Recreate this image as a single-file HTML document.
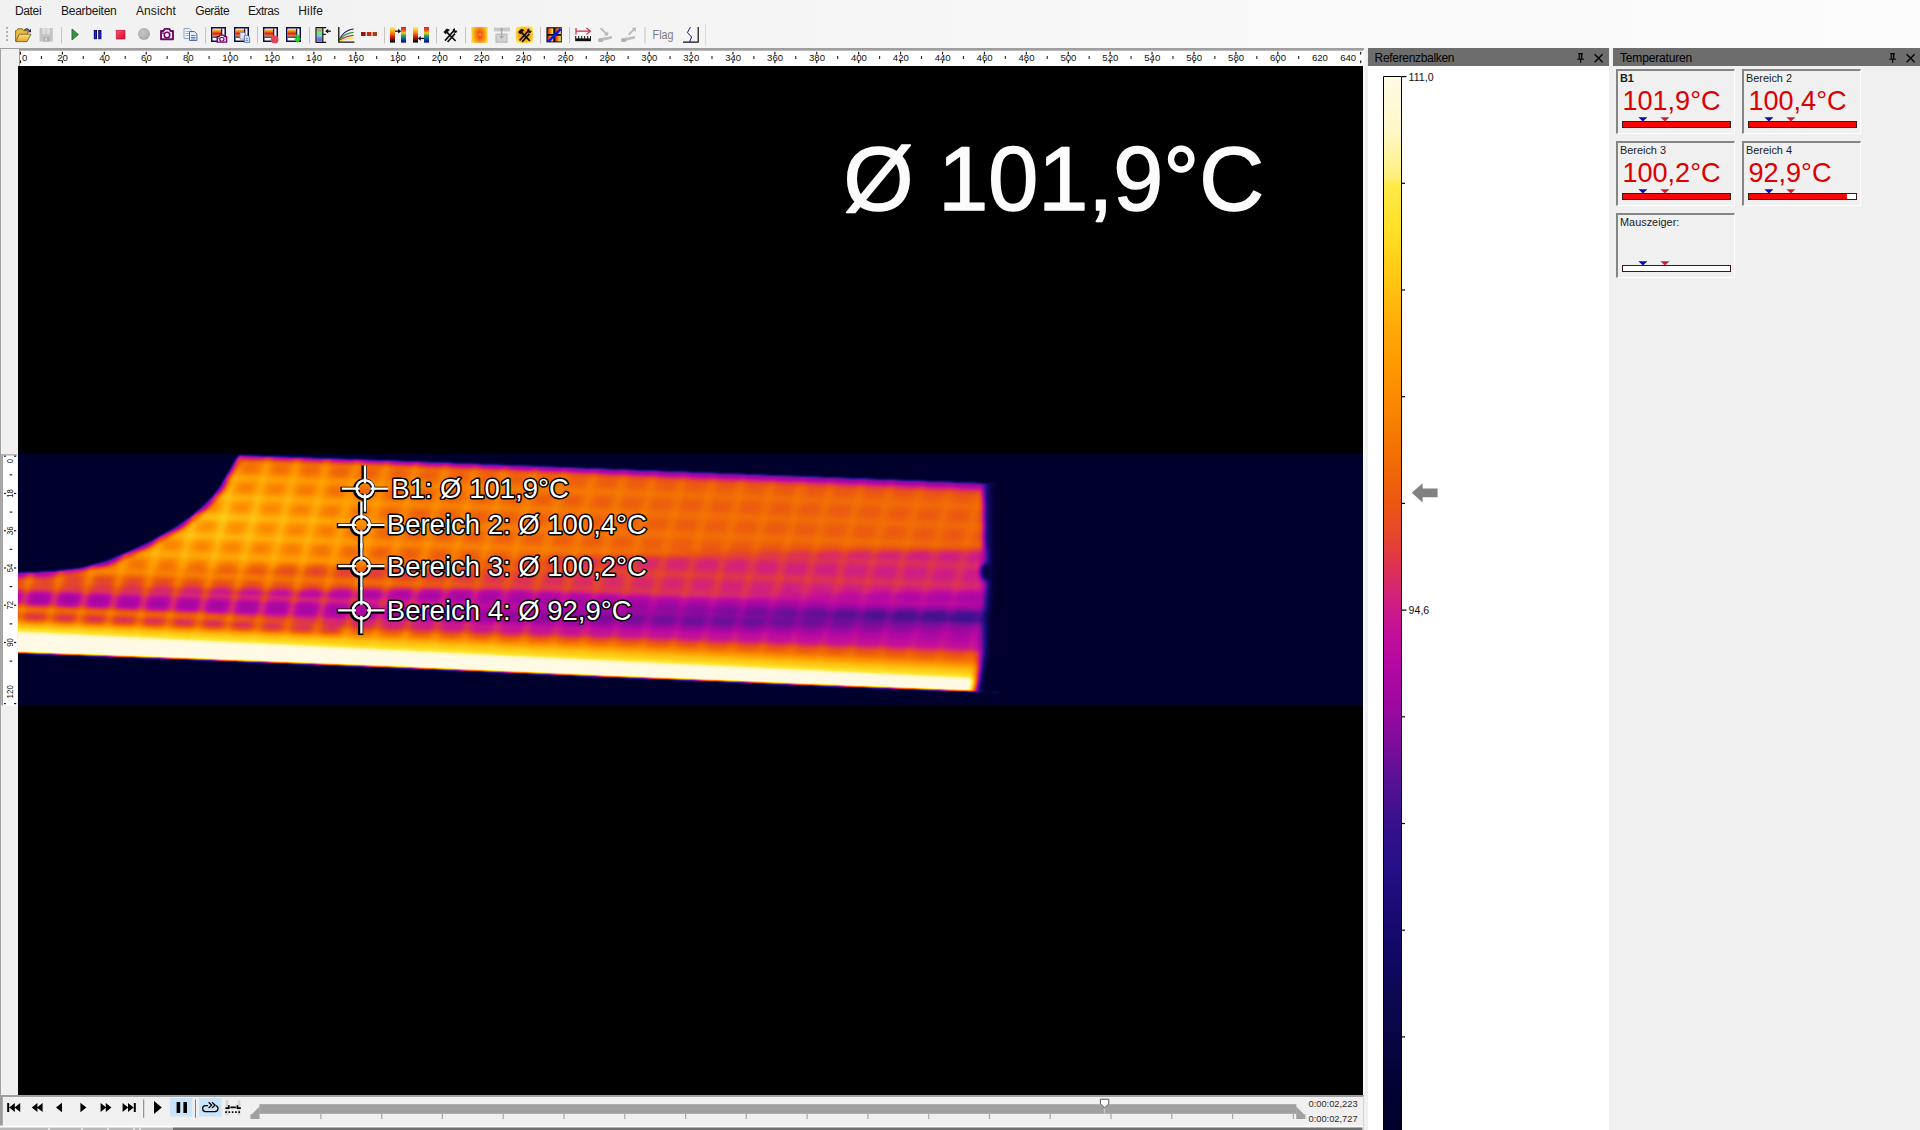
<!DOCTYPE html>
<html lang="de"><head><meta charset="utf-8"><title>Thermografie</title>
<style>
html,body{margin:0;padding:0}
body{width:1920px;height:1130px;overflow:hidden;background:#f0f0f0;position:relative;font-family:"Liberation Sans",sans-serif;color:#000}
.abs{position:absolute}
svg{display:block}
#topbar{left:0;top:0;width:1920px;height:48px;background:linear-gradient(90deg,#f1f1f1 0%,#f3f3f3 25%,#f8f8f8 60%,#fcfcfc 100%)}
.mi{position:absolute;top:3px;height:16px;line-height:16px;font-size:12px;white-space:nowrap;color:#161616}
.ptitle{position:absolute;top:48px;height:18px;background:#6d6d6d;line-height:17px;font-size:12px;color:#000;white-space:nowrap}
.ptitle span{position:absolute;left:6.6px;top:2px}
.ptitle svg{position:absolute;top:0}
#refpanel{left:1368px;top:66px;width:241px;height:1064px;background:#fff;overflow:hidden}
.tbox{position:absolute;width:116px;height:62px;border-top:2px solid #858585;border-left:2px solid #858585;border-right:1px solid #fff;border-bottom:1px solid #fff}
.tbox .lb{position:absolute;left:2px;top:1px;font-size:10.9px;line-height:13px;white-space:nowrap;color:#1c1c1c}
.tbox .val{position:absolute;left:4.4px;top:14.4px;font-size:27.1px;line-height:32px;color:#dc0000;white-space:nowrap}
.tbox .bar{position:absolute;left:4px;top:50px;width:107px;height:5px;border:1px solid #3a1a1a;background:#fff}
.tbox .bar i{display:block;height:5px;background:#fa0505}
.tbox svg{position:absolute;left:0;top:44px}
.time{position:absolute;left:1308.5px;font-size:9.3px;line-height:10px;color:#2c2c2c;white-space:nowrap}
#player{left:0;top:1095px;width:1364px;height:35px}
</style></head><body>
<div id="topbar" class="abs"><div class="mi" style="left:15px;letter-spacing:-0.363px">Datei</div><div class="mi" style="left:61px;letter-spacing:-0.254px">Bearbeiten</div><div class="mi" style="left:136px;letter-spacing:0.093px">Ansicht</div><div class="mi" style="left:195.3px;letter-spacing:-0.481px">Geräte</div><div class="mi" style="left:248px;letter-spacing:-0.501px">Extras</div><div class="mi" style="left:298.3px;letter-spacing:0.159px">Hilfe</div><svg class="abs" style="left:0;top:22px" width="720" height="26" viewBox="0 22 720 26"><defs>
<linearGradient id="gIron" x1="0" y1="0" x2="0" y2="1"><stop offset="0" stop-color="#fff35a"/><stop offset=".3" stop-color="#f6a412"/><stop offset=".6" stop-color="#dd2412"/><stop offset=".85" stop-color="#4a0a0a"/><stop offset="1" stop-color="#000"/></linearGradient>
<linearGradient id="gRain" x1="0" y1="0" x2="0" y2="1"><stop offset="0" stop-color="#d8203a"/><stop offset=".2" stop-color="#e84a20"/><stop offset=".38" stop-color="#e8d020"/><stop offset=".55" stop-color="#28b040"/><stop offset=".78" stop-color="#1048c8"/><stop offset="1" stop-color="#000058"/></linearGradient>
<linearGradient id="gTh" x1="0" y1="0" x2="0" y2="1"><stop offset="0" stop-color="#ffd83a"/><stop offset=".35" stop-color="#f07818"/><stop offset=".6" stop-color="#e01c10"/><stop offset="1" stop-color="#f6a020"/></linearGradient>
<linearGradient id="gPast" x1="0" y1="0" x2="0" y2="1"><stop offset="0" stop-color="#a8a048"/><stop offset=".3" stop-color="#7ae070"/><stop offset=".55" stop-color="#68d8d8"/><stop offset=".8" stop-color="#6868f0"/><stop offset="1" stop-color="#a070d8"/></linearGradient>
<linearGradient id="gRY" x1="0" y1="0" x2="1" y2="0"><stop offset="0" stop-color="#d81818"/><stop offset=".5" stop-color="#f89018"/><stop offset="1" stop-color="#fff060"/></linearGradient>
<linearGradient id="gStop" x1="0" y1="0" x2="1" y2="1"><stop offset="0" stop-color="#f8506c"/><stop offset="1" stop-color="#d80c30"/></linearGradient>
<radialGradient id="gRec" cx=".4" cy=".4" r=".7"><stop offset="0" stop-color="#c6c6c6"/><stop offset="1" stop-color="#a6a6a6"/></radialGradient>
<linearGradient id="gOr" x1="0" y1="0" x2="1" y2="0"><stop offset="0" stop-color="#ffe028"/><stop offset=".25" stop-color="#f88c10"/><stop offset=".52" stop-color="#ee4c10"/><stop offset=".78" stop-color="#f88c10"/><stop offset="1" stop-color="#ffe028"/></linearGradient>
<linearGradient id="gOrV" x1="0" y1="0" x2="0" y2="1"><stop offset="0" stop-color="#ffd820" stop-opacity=".55"/><stop offset=".3" stop-color="#ffd820" stop-opacity="0"/><stop offset=".7" stop-color="#ffd820" stop-opacity="0"/><stop offset="1" stop-color="#ffd820" stop-opacity=".55"/></linearGradient>
<linearGradient id="gFold" x1="0" y1="0" x2="0" y2="1"><stop offset="0" stop-color="#fbe08a"/><stop offset="1" stop-color="#e0a828"/></linearGradient>
<g id="thframe"><rect x=".75" y=".75" width="13.5" height="13.5" fill="#fff" stroke="#0a0a46" stroke-width="1.5"/><rect x="1.5" y="2.2" width="8.6" height="7.3" fill="url(#gTh)"/><rect x="10.1" y="1.5" width="1.2" height="12" fill="#0a0a46"/><rect x="1.5" y="9.5" width="12" height="1.2" fill="#0a0a46"/></g>
<g id="cam"><path d="M1,3.6h2.4l1.3-2.1h4.6l1.3,2.1h2.4v8.2h-12z" fill="#fbe6f8" stroke="#690a69" stroke-width="1.9" stroke-linejoin="round"/><circle cx="7" cy="7.6" r="2.7" fill="#fff" stroke="#690a69" stroke-width="1.6"/><rect x="2.2" y="5" width="1.6" height="1.4" fill="#690a69"/></g>
<g id="tools"><path d="M2.6,13.2L11.4,3.4M5.2,14.6L12.6,6.2" stroke="#111" stroke-width="1.7" fill="none"/><path d="M3.4,3.8L13.2,13.6" stroke="#111" stroke-width="1.7"/><path d="M1,4.6L4.4,1.2L7.6,2.4L3.2,6.8z" fill="#111"/><path d="M10.2,2.2l2.2,-1.6l0.3,2.4l2.4,0.4l-1.4,2.2l-2.6,-0.6z" fill="#111"/></g>
</defs><rect x="6" y="27" width="2" height="2" fill="#b2b2b2"/><rect x="6" y="31" width="2" height="2" fill="#b2b2b2"/><rect x="6" y="35" width="2" height="2" fill="#b2b2b2"/><rect x="6" y="39" width="2" height="2" fill="#b2b2b2"/><rect x="61" y="27" width="1" height="16.4" fill="#c4c4c4"/><rect x="205" y="27" width="1" height="16.4" fill="#c4c4c4"/><rect x="257" y="27" width="1" height="16.4" fill="#c4c4c4"/><rect x="309" y="27" width="1" height="16.4" fill="#c4c4c4"/><rect x="384" y="27" width="1" height="16.4" fill="#c4c4c4"/><rect x="436" y="27" width="1" height="16.4" fill="#c4c4c4"/><rect x="465" y="27" width="1" height="16.4" fill="#c4c4c4"/><rect x="540" y="27" width="1" height="16.4" fill="#c4c4c4"/><rect x="569" y="27" width="1" height="16.4" fill="#c4c4c4"/><rect x="644.5" y="27" width="1" height="16.4" fill="#c4c4c4"/><rect x="705" y="24" width="1" height="22" fill="#dcdcdc"/><path d="M15.6,41.2V30.6h1.2l1.2-1.8h4.4l1.2,1.8h4.2v3.6" fill="#e6bc48" stroke="#8c6c1c" stroke-width="1"/><path d="M15.8,41.6L19.2,34.2H31L27,41.6z" fill="url(#gFold)" stroke="#8c6c1c" stroke-width="1" stroke-linejoin="round"/><path d="M24.4,30.2q2.6,-3 5.2,0.6" fill="none" stroke="#1e2a52" stroke-width="1.2"/><path d="M31,28.8v3.4h-3.4z" fill="#1e2a52"/><rect x="39.6" y="28" width="13.2" height="13.6" fill="#c4c4c4"/><rect x="42.4" y="28" width="7.6" height="6.2" fill="#dedede"/><rect x="45.6" y="28.4" width="1" height="5.4" fill="#c4c4c4"/><rect x="43.4" y="37" width="6.4" height="4.6" fill="#b0b0b0"/><rect x="45" y="38" width="2" height="2.6" fill="#d6d6d6"/><path d="M72,29L78.4,34.5L72,40z" fill="#379446" stroke="#1f6a2b" stroke-width=".9" stroke-linejoin="round"/><rect x="93.8" y="30" width="3.2" height="9.2" fill="#08087c"/><rect x="94.8" y="30.6" width="1.2" height="8" fill="#2c2cc4"/><rect x="98.2" y="30" width="3.2" height="9.2" fill="#08087c"/><rect x="99.2" y="30.6" width="1.2" height="8" fill="#2c2cc4"/><rect x="116.2" y="30.2" width="8.8" height="8.8" fill="url(#gStop)" stroke="#c01030" stroke-width=".6"/><circle cx="144" cy="34" r="6" fill="url(#gRec)"/><g transform="translate(160,27.4)"><use href="#cam"/></g><path d="M184,28.5h5.6l2,2v8h-7.6z" fill="#f2f5fb" stroke="#8fa3c6" stroke-width="1"/><path d="M185.6,31.5h4M185.6,33.5h4M185.6,35.5h3" stroke="#9db0d2" stroke-width="1"/><path d="M189.5,31.5h5l2.4,2.4v6.6h-7.4z" fill="#e4ecf9" stroke="#4f70a8" stroke-width="1"/><path d="M191,35.5h4.4M191,37.5h4.4M191,39h4.4" stroke="#5f7fb6" stroke-width="1"/><g transform="translate(211,27)"><use href="#thframe"/></g><g transform="translate(216.4,34.2) scale(.78,.68)"><use href="#cam"/></g><g transform="translate(234,27)"><use href="#thframe"/></g><path d="M240,32.5h4l1.6,1.6v5h-5.6z" fill="#e4e4ec" stroke="#9090a8" stroke-width=".9"/><path d="M244.4,35.4h3.4l1.8,1.8v5.2h-5.2z" fill="#dfe6f6" stroke="#5874ac" stroke-width=".9"/><path d="M245.6,38.6h2.6M245.6,40.4h2.6" stroke="#5874ac" stroke-width=".8"/><g transform="translate(263,27)"><use href="#thframe"/></g><circle cx="274.6" cy="39.4" r="3.9" fill="#e0485a"/><g transform="translate(286,27)"><use href="#thframe"/></g><path d="M296.2,34.5h2.6v4h2.4l-3.7,4.6l-3.7,-4.6h2.4z" fill="#22d322"/><rect x="316.6" y="28.6" width="5.6" height="13" fill="url(#gPast)"/><path d="M315.6,27.6h10.6M315.6,42.4h10.6M316,27.6v14.8M322.8,27.6v14.8M322.8,34.4h3" stroke="#111" stroke-width="1.2" fill="none"/><path d="M326.2,31.2h4.6" stroke="#111" stroke-width="1.3"/><path d="M325.2,31.2l3,-2.4v4.8z" fill="#111"/><path d="M339,40Q344,30 353.6,29" stroke="#101070" stroke-width="1.1" fill="none"/><path d="M339,40.4Q345,33 353.6,32.4" stroke="#2a9a3a" stroke-width="1.1" fill="none"/><path d="M339,40.8Q346,36 353.6,35.4" stroke="#d42a2a" stroke-width="1.1" fill="none"/><path d="M339,41.2Q347,38.6 353.6,38.4" stroke="#e8e048" stroke-width="1.3" fill="none"/><path d="M338.8,27v15.2H354.4" stroke="#111" stroke-width="1.3" fill="none"/><rect x="361" y="32" width="4.6" height="4" fill="#8c1a12"/><rect x="366.8" y="32" width="4.6" height="4" fill="#c42c16"/><rect x="372.6" y="32" width="4.4" height="4" fill="#9c4418"/><rect x="390" y="27" width="5" height="15.6" fill="url(#gIron)"/><rect x="401" y="27" width="5" height="15.6" fill="url(#gRain)"/><path d="M395,31.2h4" stroke="#111" stroke-width="1.3"/><path d="M401.2,31.2l-3,-2.4v4.8z" fill="#111"/><rect x="413" y="27" width="5" height="15.6" fill="url(#gIron)"/><rect x="424" y="27" width="5" height="15.6" fill="url(#gRain)"/><path d="M420,38.4h4" stroke="#111" stroke-width="1.3"/><path d="M417.8,38.4l3,-2.4v4.8z" fill="#111"/><g transform="translate(442.4,27.4)"><use href="#tools"/></g><rect x="471.4" y="27" width="16.2" height="15.6" fill="url(#gOr)"/><rect x="471.4" y="27" width="16.2" height="15.6" fill="url(#gOrV)"/><circle cx="480" cy="34.4" r="1" fill="#f8a070"/><rect x="494" y="27.6" width="16" height="3.8" fill="#c9c9c9"/><rect x="496" y="34.2" width="11" height="8" fill="#d2d2d2" stroke="#b4b4b4" stroke-width="1"/><path d="M501.6,29v8" stroke="#a9a9a9" stroke-width="1.4"/><path d="M499,36h5.2l-2.6,3z" fill="#a9a9a9"/><path d="M499.4,29.8h4.4l-2.2,-2.4z" fill="#a9a9a9"/><defs><radialGradient id="gTO" cx=".5" cy=".5" r=".62"><stop offset="0" stop-color="#f08418"/><stop offset=".6" stop-color="#f8b020"/><stop offset="1" stop-color="#ffe838" stop-opacity=".75"/></radialGradient></defs><rect x="516" y="26.6" width="17" height="16.4" rx="2" fill="url(#gTO)"/><g transform="translate(517,27.6) scale(.98)"><use href="#tools"/></g><rect x="546.4" y="27.2" width="15.4" height="15.2" fill="#111"/><rect x="547.6" y="28.4" width="5.6" height="5.6" fill="url(#gRY)"/><rect x="555.2" y="28.4" width="5.6" height="5.6" fill="url(#gRY)"/><rect x="547.6" y="35.8" width="5.6" height="5.6" fill="url(#gRY)"/><rect x="555.2" y="35.8" width="5.6" height="5.6" fill="url(#gRY)"/><path d="M548.4,41.6L560.6,29" stroke="#1616e6" stroke-width="2.6"/><path d="M576,28v6.4M576,31.2h13.6" stroke="#c0304c" stroke-width="1.2" fill="none"/><path d="M586.4,28l4,3.2l-4,3.2" stroke="#c0304c" stroke-width="1.2" fill="none"/><rect x="575.2" y="38.4" width="15.8" height="2.8" fill="#111"/><rect x="575.2" y="36" width="1" height="3" fill="#111"/><rect x="578.2" y="36" width="1" height="3" fill="#111"/><rect x="581.2" y="36" width="1" height="3" fill="#111"/><rect x="584.2" y="36" width="1" height="3" fill="#111"/><rect x="587.2" y="36" width="1" height="3" fill="#111"/><rect x="590" y="36" width="1" height="3" fill="#111"/><path d="M600.6,28.2l6.6,6.4" stroke="#b7b7b7" stroke-width="1.8"/><path d="M604,35.4h4.2v-4.2z" fill="#b7b7b7"/><path d="M598.6,38.6l13.4,-2.6v2.6l-13.4,3.4z" fill="#bdbdbd"/><rect x="598.4" y="38.6" width="4.4" height="3.4" fill="#b0b0b0"/><path d="M628.6,34.6l6.4,-6" stroke="#b7b7b7" stroke-width="1.8"/><path d="M631.6,27.8h4.2v4.2z" fill="#b7b7b7"/><path d="M621.6,38.6l13.4,-2.6v2.6l-13.4,3.4z" fill="#bdbdbd"/><rect x="621.4" y="38.6" width="4.4" height="3.4" fill="#b0b0b0"/><text x="652.6" y="38.6" font-family="Liberation Sans, sans-serif" font-size="12" fill="#7c7c7c" textLength="20.8" lengthAdjust="spacingAndGlyphs">Flag</text><path d="M690.4,27.2L687.4,32.6L691.6,37L689.6,42" stroke="#14147c" stroke-width="1" fill="none"/><path d="M698.2,27v15.2H683" stroke="#111" stroke-width="1.2" fill="none"/></svg></div>
<svg class="abs" style="left:0;top:48px" width="1366" height="1050" viewBox="0 48 1366 1050" font-family="Liberation Sans, sans-serif"><defs>
<filter id="iron" filterUnits="userSpaceOnUse" x="18" y="454" width="1345" height="252" color-interpolation-filters="sRGB">
<feGaussianBlur stdDeviation="1.25"/>
<feComponentTransfer><feFuncR type="table" tableValues="0.000 0.005 0.012 0.021 0.030 0.037 0.043 0.050 0.059 0.070 0.082 0.098 0.115 0.137 0.162 0.195 0.234 0.291 0.349 0.425 0.502 0.563 0.624 0.670 0.713 0.747 0.780 0.810 0.841 0.868 0.889 0.905 0.921 0.933 0.943 0.955 0.968 0.978 0.988 0.998 1.000 1.000 1.000 1.000 1.000 1.000 1.000 1.000 1.000 1.000 1.000 1.000 1.000 1.000 1.000"/><feFuncG type="table" tableValues="0.000 0.000 0.003 0.009 0.015 0.021 0.027 0.031 0.031 0.031 0.033 0.041 0.049 0.056 0.063 0.063 0.063 0.063 0.062 0.055 0.047 0.039 0.032 0.031 0.035 0.052 0.077 0.118 0.159 0.203 0.254 0.295 0.333 0.373 0.413 0.450 0.487 0.522 0.556 0.590 0.624 0.658 0.704 0.749 0.791 0.831 0.872 0.893 0.911 0.942 0.955 0.969 0.976 0.980 0.984"/><feFuncB type="table" tableValues="0.173 0.183 0.200 0.224 0.248 0.273 0.297 0.326 0.362 0.390 0.416 0.446 0.478 0.512 0.542 0.546 0.553 0.567 0.581 0.596 0.612 0.619 0.627 0.636 0.638 0.612 0.574 0.513 0.418 0.316 0.214 0.143 0.082 0.049 0.029 0.017 0.005 0.000 0.000 0.000 0.014 0.031 0.046 0.062 0.082 0.110 0.151 0.204 0.260 0.505 0.627 0.750 0.815 0.859 0.902"/><feFuncA type="linear" slope="0" intercept="1"/></feComponentTransfer>
</filter>
<filter id="b3" filterUnits="userSpaceOnUse" x="-100" y="380" width="1300" height="400" color-interpolation-filters="sRGB"><feGaussianBlur stdDeviation="3"/></filter>
<filter id="b5" filterUnits="userSpaceOnUse" x="-100" y="380" width="1300" height="400" color-interpolation-filters="sRGB"><feGaussianBlur stdDeviation="4.2"/></filter>
<filter id="b8" filterUnits="userSpaceOnUse" x="-100" y="380" width="1300" height="400" color-interpolation-filters="sRGB"><feGaussianBlur stdDeviation="9"/></filter>
<filter id="b15" filterUnits="userSpaceOnUse" x="-100" y="380" width="1300" height="400" color-interpolation-filters="sRGB"><feGaussianBlur stdDeviation="2.3"/></filter>
<filter id="b2" filterUnits="userSpaceOnUse" x="-100" y="380" width="1300" height="400" color-interpolation-filters="sRGB"><feGaussianBlur stdDeviation="2"/></filter>
<clipPath id="objclip"><path d="M-10,572.6 L18,572.4 L30,572.2 L55,571 L80,568 L105,561.2 L129,551.6 L152,540.4 L170,530.5 L180,523.9 L192.6,515.3 L202.9,506.1 L212.1,497 L219,487.8 L224.7,478.6 L229.3,470.6 L233.9,462.6 L237,457.8 L239.4,455.2 L400,460.8 L600,468.4 L800,476 L1002,483.8 L1002,692.6 L977,691.6 L800,684.4 L600,676.2 L400,667.6 L200,659.6 L18,652.8 L-10,651.8 Z"/></clipPath>
<linearGradient id="hbase" gradientUnits="userSpaceOnUse" x1="18" y1="0" x2="986" y2="0"><stop offset="0" stop-color="#acacac"/><stop offset=".36" stop-color="#a7a7a7"/><stop offset=".7" stop-color="#9f9f9f"/><stop offset="1" stop-color="#9d9d9d"/></linearGradient>
<radialGradient id="warm" gradientUnits="userSpaceOnUse" cx="215" cy="520" r="190" gradientTransform="translate(215,520) scale(1,.36) translate(-215,-520)"><stop offset="0" stop-color="#fff" stop-opacity=".34"/><stop offset=".6" stop-color="#fff" stop-opacity=".18"/><stop offset="1" stop-color="#fff" stop-opacity="0"/></radialGradient>
<linearGradient id="hcold" gradientUnits="userSpaceOnUse" x1="400" y1="0" x2="986" y2="0"><stop offset="0" stop-color="#fff" stop-opacity="0"/><stop offset=".4" stop-color="#fff" stop-opacity=".55"/><stop offset="1" stop-color="#fff" stop-opacity="1"/></linearGradient>
<linearGradient id="hL1" gradientUnits="userSpaceOnUse" x1="18" y1="0" x2="986" y2="0"><stop offset="0" stop-color="#fff" stop-opacity=".32"/><stop offset=".35" stop-color="#fff" stop-opacity=".42"/><stop offset=".7" stop-color="#fff" stop-opacity=".8"/><stop offset="1" stop-color="#fff" stop-opacity=".95"/></linearGradient>
<mask id="mL1" maskUnits="userSpaceOnUse" x="0" y="440" width="1000" height="280"><rect x="0" y="440" width="1000" height="280" fill="url(#hL1)"/></mask>
<mask id="mcold" maskUnits="userSpaceOnUse" x="0" y="440" width="1000" height="280"><rect x="0" y="440" width="1000" height="280" fill="url(#hcold)"/></mask>
<radialGradient id="blob"><stop offset="0" stop-color="#000" stop-opacity=".10"/><stop offset=".6" stop-color="#000" stop-opacity=".06"/><stop offset="1" stop-color="#000" stop-opacity="0"/></radialGradient>
<pattern id="tex" patternUnits="userSpaceOnUse" x="3" y="448" width="29.7" height="19.6">
<rect x="0" y="0" width="6.5" height="19.6" fill="#fff" fill-opacity=".15"/>
<rect x="0" y="0" width="29.7" height="5.5" fill="#fff" fill-opacity=".16"/>
<ellipse cx="18.1" cy="12.5" rx="12" ry="7.5" fill="url(#blob)"/>
</pattern>
<linearGradient id="htex" gradientUnits="userSpaceOnUse" x1="18" y1="0" x2="986" y2="0"><stop offset="0" stop-color="#fff" stop-opacity="1"/><stop offset=".3" stop-color="#fff" stop-opacity=".9"/><stop offset=".65" stop-color="#fff" stop-opacity=".36"/><stop offset="1" stop-color="#fff" stop-opacity=".28"/></linearGradient>
<mask id="mtex" maskUnits="userSpaceOnUse" x="0" y="400" width="1040" height="340"><rect x="0" y="400" width="1040" height="340" fill="url(#htex)"/></mask>
</defs><rect x="0" y="48" width="1364" height="1" fill="#9c9c9c"/><rect x="0" y="49" width="1" height="1047" fill="#a2a2a2"/><rect x="1" y="454" width="1" height="251" fill="#b0b0b0"/><rect x="19" y="50" width="1345" height="16" fill="#fff"/><rect x="19" y="48" width="1345" height="2.7" fill="#9e9e9e"/><rect x="19" y="50" width="1" height="16" fill="#a0a0a0"/><rect x="19.90" y="51.8" width="1.2" height="2.8" fill="#1a1a1a"/><rect x="19.90" y="60.4" width="1.2" height="2.8" fill="#1a1a1a"/><text x="22" y="60.9" font-size="9.6" fill="#111">0</text><rect x="61.81" y="51.8" width="1.2" height="2.8" fill="#1a1a1a"/><rect x="61.81" y="60.4" width="1.2" height="2.8" fill="#1a1a1a"/><text x="62.61" y="60.9" font-size="9.6" fill="#111" text-anchor="middle">20</text><rect x="103.72" y="51.8" width="1.2" height="2.8" fill="#1a1a1a"/><rect x="103.72" y="60.4" width="1.2" height="2.8" fill="#1a1a1a"/><text x="104.52" y="60.9" font-size="9.6" fill="#111" text-anchor="middle">40</text><rect x="145.63" y="51.8" width="1.2" height="2.8" fill="#1a1a1a"/><rect x="145.63" y="60.4" width="1.2" height="2.8" fill="#1a1a1a"/><text x="146.43" y="60.9" font-size="9.6" fill="#111" text-anchor="middle">60</text><rect x="187.54" y="51.8" width="1.2" height="2.8" fill="#1a1a1a"/><rect x="187.54" y="60.4" width="1.2" height="2.8" fill="#1a1a1a"/><text x="188.34" y="60.9" font-size="9.6" fill="#111" text-anchor="middle">80</text><rect x="229.45" y="51.8" width="1.2" height="2.8" fill="#1a1a1a"/><rect x="229.45" y="60.4" width="1.2" height="2.8" fill="#1a1a1a"/><text x="230.25" y="60.9" font-size="9.6" fill="#111" text-anchor="middle">100</text><rect x="271.36" y="51.8" width="1.2" height="2.8" fill="#1a1a1a"/><rect x="271.36" y="60.4" width="1.2" height="2.8" fill="#1a1a1a"/><text x="272.16" y="60.9" font-size="9.6" fill="#111" text-anchor="middle">120</text><rect x="313.27" y="51.8" width="1.2" height="2.8" fill="#1a1a1a"/><rect x="313.27" y="60.4" width="1.2" height="2.8" fill="#1a1a1a"/><text x="314.07" y="60.9" font-size="9.6" fill="#111" text-anchor="middle">140</text><rect x="355.18" y="51.8" width="1.2" height="2.8" fill="#1a1a1a"/><rect x="355.18" y="60.4" width="1.2" height="2.8" fill="#1a1a1a"/><text x="355.98" y="60.9" font-size="9.6" fill="#111" text-anchor="middle">160</text><rect x="397.09" y="51.8" width="1.2" height="2.8" fill="#1a1a1a"/><rect x="397.09" y="60.4" width="1.2" height="2.8" fill="#1a1a1a"/><text x="397.89" y="60.9" font-size="9.6" fill="#111" text-anchor="middle">180</text><rect x="439.00" y="51.8" width="1.2" height="2.8" fill="#1a1a1a"/><rect x="439.00" y="60.4" width="1.2" height="2.8" fill="#1a1a1a"/><text x="439.80" y="60.9" font-size="9.6" fill="#111" text-anchor="middle">200</text><rect x="480.91" y="51.8" width="1.2" height="2.8" fill="#1a1a1a"/><rect x="480.91" y="60.4" width="1.2" height="2.8" fill="#1a1a1a"/><text x="481.71" y="60.9" font-size="9.6" fill="#111" text-anchor="middle">220</text><rect x="522.82" y="51.8" width="1.2" height="2.8" fill="#1a1a1a"/><rect x="522.82" y="60.4" width="1.2" height="2.8" fill="#1a1a1a"/><text x="523.62" y="60.9" font-size="9.6" fill="#111" text-anchor="middle">240</text><rect x="564.73" y="51.8" width="1.2" height="2.8" fill="#1a1a1a"/><rect x="564.73" y="60.4" width="1.2" height="2.8" fill="#1a1a1a"/><text x="565.53" y="60.9" font-size="9.6" fill="#111" text-anchor="middle">260</text><rect x="606.64" y="51.8" width="1.2" height="2.8" fill="#1a1a1a"/><rect x="606.64" y="60.4" width="1.2" height="2.8" fill="#1a1a1a"/><text x="607.44" y="60.9" font-size="9.6" fill="#111" text-anchor="middle">280</text><rect x="648.55" y="51.8" width="1.2" height="2.8" fill="#1a1a1a"/><rect x="648.55" y="60.4" width="1.2" height="2.8" fill="#1a1a1a"/><text x="649.35" y="60.9" font-size="9.6" fill="#111" text-anchor="middle">300</text><rect x="690.46" y="51.8" width="1.2" height="2.8" fill="#1a1a1a"/><rect x="690.46" y="60.4" width="1.2" height="2.8" fill="#1a1a1a"/><text x="691.26" y="60.9" font-size="9.6" fill="#111" text-anchor="middle">320</text><rect x="732.37" y="51.8" width="1.2" height="2.8" fill="#1a1a1a"/><rect x="732.37" y="60.4" width="1.2" height="2.8" fill="#1a1a1a"/><text x="733.17" y="60.9" font-size="9.6" fill="#111" text-anchor="middle">340</text><rect x="774.28" y="51.8" width="1.2" height="2.8" fill="#1a1a1a"/><rect x="774.28" y="60.4" width="1.2" height="2.8" fill="#1a1a1a"/><text x="775.08" y="60.9" font-size="9.6" fill="#111" text-anchor="middle">360</text><rect x="816.19" y="51.8" width="1.2" height="2.8" fill="#1a1a1a"/><rect x="816.19" y="60.4" width="1.2" height="2.8" fill="#1a1a1a"/><text x="816.99" y="60.9" font-size="9.6" fill="#111" text-anchor="middle">380</text><rect x="858.10" y="51.8" width="1.2" height="2.8" fill="#1a1a1a"/><rect x="858.10" y="60.4" width="1.2" height="2.8" fill="#1a1a1a"/><text x="858.90" y="60.9" font-size="9.6" fill="#111" text-anchor="middle">400</text><rect x="900.01" y="51.8" width="1.2" height="2.8" fill="#1a1a1a"/><rect x="900.01" y="60.4" width="1.2" height="2.8" fill="#1a1a1a"/><text x="900.81" y="60.9" font-size="9.6" fill="#111" text-anchor="middle">420</text><rect x="941.92" y="51.8" width="1.2" height="2.8" fill="#1a1a1a"/><rect x="941.92" y="60.4" width="1.2" height="2.8" fill="#1a1a1a"/><text x="942.72" y="60.9" font-size="9.6" fill="#111" text-anchor="middle">440</text><rect x="983.83" y="51.8" width="1.2" height="2.8" fill="#1a1a1a"/><rect x="983.83" y="60.4" width="1.2" height="2.8" fill="#1a1a1a"/><text x="984.63" y="60.9" font-size="9.6" fill="#111" text-anchor="middle">460</text><rect x="1025.74" y="51.8" width="1.2" height="2.8" fill="#1a1a1a"/><rect x="1025.74" y="60.4" width="1.2" height="2.8" fill="#1a1a1a"/><text x="1026.54" y="60.9" font-size="9.6" fill="#111" text-anchor="middle">480</text><rect x="1067.65" y="51.8" width="1.2" height="2.8" fill="#1a1a1a"/><rect x="1067.65" y="60.4" width="1.2" height="2.8" fill="#1a1a1a"/><text x="1068.45" y="60.9" font-size="9.6" fill="#111" text-anchor="middle">500</text><rect x="1109.56" y="51.8" width="1.2" height="2.8" fill="#1a1a1a"/><rect x="1109.56" y="60.4" width="1.2" height="2.8" fill="#1a1a1a"/><text x="1110.36" y="60.9" font-size="9.6" fill="#111" text-anchor="middle">520</text><rect x="1151.47" y="51.8" width="1.2" height="2.8" fill="#1a1a1a"/><rect x="1151.47" y="60.4" width="1.2" height="2.8" fill="#1a1a1a"/><text x="1152.27" y="60.9" font-size="9.6" fill="#111" text-anchor="middle">540</text><rect x="1193.38" y="51.8" width="1.2" height="2.8" fill="#1a1a1a"/><rect x="1193.38" y="60.4" width="1.2" height="2.8" fill="#1a1a1a"/><text x="1194.18" y="60.9" font-size="9.6" fill="#111" text-anchor="middle">560</text><rect x="1235.29" y="51.8" width="1.2" height="2.8" fill="#1a1a1a"/><rect x="1235.29" y="60.4" width="1.2" height="2.8" fill="#1a1a1a"/><text x="1236.09" y="60.9" font-size="9.6" fill="#111" text-anchor="middle">580</text><rect x="1277.20" y="51.8" width="1.2" height="2.8" fill="#1a1a1a"/><rect x="1277.20" y="60.4" width="1.2" height="2.8" fill="#1a1a1a"/><text x="1278.00" y="60.9" font-size="9.6" fill="#111" text-anchor="middle">600</text><text x="1319.91" y="60.9" font-size="9.6" fill="#111" text-anchor="middle">620</text><rect x="1360.10" y="51.8" width="1.2" height="2.8" fill="#1a1a1a"/><rect x="1360.10" y="60.4" width="1.2" height="2.8" fill="#1a1a1a"/><text x="1356.20" y="60.9" font-size="9.6" fill="#111" text-anchor="end">640</text><rect x="40.85" y="56" width="1.1" height="3" fill="#222"/><rect x="82.76" y="56" width="1.1" height="3" fill="#222"/><rect x="124.67" y="56" width="1.1" height="3" fill="#222"/><rect x="166.59" y="56" width="1.1" height="3" fill="#222"/><rect x="208.50" y="56" width="1.1" height="3" fill="#222"/><rect x="250.41" y="56" width="1.1" height="3" fill="#222"/><rect x="292.31" y="56" width="1.1" height="3" fill="#222"/><rect x="334.22" y="56" width="1.1" height="3" fill="#222"/><rect x="376.13" y="56" width="1.1" height="3" fill="#222"/><rect x="418.04" y="56" width="1.1" height="3" fill="#222"/><rect x="459.95" y="56" width="1.1" height="3" fill="#222"/><rect x="501.86" y="56" width="1.1" height="3" fill="#222"/><rect x="543.77" y="56" width="1.1" height="3" fill="#222"/><rect x="585.68" y="56" width="1.1" height="3" fill="#222"/><rect x="627.59" y="56" width="1.1" height="3" fill="#222"/><rect x="669.50" y="56" width="1.1" height="3" fill="#222"/><rect x="711.41" y="56" width="1.1" height="3" fill="#222"/><rect x="753.32" y="56" width="1.1" height="3" fill="#222"/><rect x="795.23" y="56" width="1.1" height="3" fill="#222"/><rect x="837.14" y="56" width="1.1" height="3" fill="#222"/><rect x="879.05" y="56" width="1.1" height="3" fill="#222"/><rect x="920.96" y="56" width="1.1" height="3" fill="#222"/><rect x="962.87" y="56" width="1.1" height="3" fill="#222"/><rect x="1004.78" y="56" width="1.1" height="3" fill="#222"/><rect x="1046.70" y="56" width="1.1" height="3" fill="#222"/><rect x="1088.61" y="56" width="1.1" height="3" fill="#222"/><rect x="1130.52" y="56" width="1.1" height="3" fill="#222"/><rect x="1172.42" y="56" width="1.1" height="3" fill="#222"/><rect x="1214.34" y="56" width="1.1" height="3" fill="#222"/><rect x="1256.25" y="56" width="1.1" height="3" fill="#222"/><rect x="1298.15" y="56" width="1.1" height="3" fill="#222"/><rect x="1363" y="50" width="1.6" height="1046" fill="#fcfcfc"/><rect x="18" y="66" width="1345" height="1029" fill="#000"/><rect x="2" y="454.6" width="15.2" height="251" fill="#fff"/><rect x="2" y="454.6" width="1" height="251" fill="#a0a0a0"/><rect x="2" y="454.4" width="15" height="1" fill="#909090"/><rect x="14" y="455.60" width="2.2" height="1.2" fill="#1a1a1a"/><rect x="4" y="455.60" width="1.9" height="1.2" fill="#1a1a1a"/><text transform="translate(12.6,458.90) rotate(-90)" font-size="9.6" fill="#111" text-anchor="end" textLength="4.4" lengthAdjust="spacingAndGlyphs">0</text><rect x="14" y="492.86" width="2.2" height="1.2" fill="#1a1a1a"/><rect x="4" y="492.86" width="1.9" height="1.2" fill="#1a1a1a"/><text transform="translate(12.6,493.46) rotate(-90)" font-size="9.6" fill="#111" text-anchor="middle" textLength="8.6" lengthAdjust="spacingAndGlyphs">18</text><rect x="14" y="530.12" width="2.2" height="1.2" fill="#1a1a1a"/><rect x="4" y="530.12" width="1.9" height="1.2" fill="#1a1a1a"/><text transform="translate(12.6,530.72) rotate(-90)" font-size="9.6" fill="#111" text-anchor="middle" textLength="8.6" lengthAdjust="spacingAndGlyphs">36</text><rect x="14" y="567.38" width="2.2" height="1.2" fill="#1a1a1a"/><rect x="4" y="567.38" width="1.9" height="1.2" fill="#1a1a1a"/><text transform="translate(12.6,567.98) rotate(-90)" font-size="9.6" fill="#111" text-anchor="middle" textLength="8.6" lengthAdjust="spacingAndGlyphs">54</text><rect x="14" y="604.64" width="2.2" height="1.2" fill="#1a1a1a"/><rect x="4" y="604.64" width="1.9" height="1.2" fill="#1a1a1a"/><text transform="translate(12.6,605.24) rotate(-90)" font-size="9.6" fill="#111" text-anchor="middle" textLength="8.6" lengthAdjust="spacingAndGlyphs">72</text><rect x="14" y="641.90" width="2.2" height="1.2" fill="#1a1a1a"/><rect x="4" y="641.90" width="1.9" height="1.2" fill="#1a1a1a"/><text transform="translate(12.6,642.50) rotate(-90)" font-size="9.6" fill="#111" text-anchor="middle" textLength="8.6" lengthAdjust="spacingAndGlyphs">90</text><rect x="14" y="703.00" width="2.2" height="1.2" fill="#1a1a1a"/><rect x="4" y="703.00" width="1.9" height="1.2" fill="#1a1a1a"/><text transform="translate(12.6,698.40) rotate(-90)" font-size="9.6" fill="#111" text-anchor="start" textLength="13.2" lengthAdjust="spacingAndGlyphs">120</text><rect x="9.6" y="474.23" width="2.6" height="1.2" fill="#222"/><rect x="9.6" y="511.49" width="2.6" height="1.2" fill="#222"/><rect x="9.6" y="548.75" width="2.6" height="1.2" fill="#222"/><rect x="9.6" y="586.01" width="2.6" height="1.2" fill="#222"/><rect x="9.6" y="623.27" width="2.6" height="1.2" fill="#222"/><rect x="9.6" y="660.53" width="2.6" height="1.2" fill="#222"/><g filter="url(#iron)"><rect x="0" y="440" width="1400" height="280" fill="#000"/><g clip-path="url(#objclip)"><rect x="0" y="440" width="1000" height="270" fill="url(#hbase)"/><rect x="0" y="440" width="500" height="160" fill="url(#warm)"/><g filter="url(#b3)"><path d="M380,452 L1000,476 L1000,493 L700,480 L380,461Z" fill="#787878" fill-opacity=".8"/></g><g filter="url(#b2)"><path d="M-10,572.6 L18,572.4 L30,572.2 L55,571 L80,568 L105,561.2 L129,551.6 L152,540.4 L170,530.5 L180,523.9 L192.6,515.3 L202.9,506.1 L212.1,497 L219,487.8 L224.7,478.6 L229.3,470.6 L233.9,462.6 L237,457.8 L239.4,455.2 L400,460.8 L600,468.4 L800,476 L988,483.2 L989,520 L988,640" fill="none" stroke="#4c4c4c" stroke-opacity=".8" stroke-width="9" stroke-linejoin="round"/></g><g mask="url(#mL1)"><g filter="url(#b3)"><path d="M-20,575 L300,567 L510,560 L700,553 L1000,549 L1000,602 L700,600 L510,589 L300,585 L-20,585Z" fill="#808080"/></g></g><g filter="url(#b3)"><path d="M-20,585.5 L300,590 L510,587 L700,597 L1000,592 L1000,652 L700,641 L510,634 L340,626 L200,615 L-20,606Z" fill="#6b6b6b" fill-opacity=".88"/></g><g filter="url(#b3)"><path d="M-20,610 L200,618 L340,629 L340,636 L200,630 L-20,623Z" fill="#757575" fill-opacity=".55"/></g><g mask="url(#mcold)"><g filter="url(#b5)"><path d="M420,602 L700,608 L1000,610 L1000,627 L700,627 L420,619Z" fill="#3d3d3d" fill-opacity=".72"/></g></g><g mask="url(#mtex)"><g transform="matrix(1,0.0385,-0.24,1,132,-0.693)" filter="url(#b15)"><rect x="-80" y="420" width="1200" height="260" fill="url(#tex)"/></g></g><g filter="url(#b5)"><path d="M-20,622.4 L18,622.8 L500,644.6 L940,664.6 L1000,667.4 L1000,720 L-20,690Z" fill="#d9d9d9" fill-opacity=".92"/></g><g filter="url(#b2)"><path d="M-20,631.4 L18,631.8 L500,655.4 L940,676.4 L1000,679.4 L1000,720 L-20,690Z" fill="#fff"/></g><g filter="url(#b5)"><path d="M988.4,430 L988.4,560 L987.4,612 L985,650 L979,676 L969,720 L1030,720 L1030,430Z" fill="#000"/></g><rect x="996" y="430" width="40" height="300" fill="#000"/><g filter="url(#b2)"><ellipse cx="986" cy="572" rx="5" ry="8" fill="#000" fill-opacity=".8"/></g></g></g><clipPath id="holes" clip-rule="evenodd"><path clip-rule="evenodd" d="M0,0H1400V1200H0ZM359.4,488.6a5.6,5.6 0 1,0 11.2,0a5.6,5.6 0 1,0 -11.2,0ZM355.79999999999995,524.8a5.6,5.6 0 1,0 11.2,0a5.6,5.6 0 1,0 -11.2,0ZM355.79999999999995,566.2a5.6,5.6 0 1,0 11.2,0a5.6,5.6 0 1,0 -11.2,0ZM355.79999999999995,610.4a5.6,5.6 0 1,0 11.2,0a5.6,5.6 0 1,0 -11.2,0Z"/></clipPath><g clip-path="url(#holes)"><g transform="translate(-0.8,0.8)"><path d="M341.2,488.6H388.8M365.0,464.8V512.4" stroke="#000" stroke-width="5.3" fill="none"/><circle cx="365" cy="488.6" r="8.4" fill="none" stroke="#000" stroke-width="5.6"/></g><g transform="translate(-0.8,0.8)"><path d="M337.6,524.8H385.2M361.4,501.0V548.6" stroke="#000" stroke-width="5.3" fill="none"/><circle cx="361.4" cy="524.8" r="8.4" fill="none" stroke="#000" stroke-width="5.6"/></g><g transform="translate(-0.8,0.8)"><path d="M337.6,566.2H385.2M361.4,542.4V590.0" stroke="#000" stroke-width="5.3" fill="none"/><circle cx="361.4" cy="566.2" r="8.4" fill="none" stroke="#000" stroke-width="5.6"/></g><g transform="translate(-0.8,0.8)"><path d="M337.6,610.4H385.2M361.4,586.6V634.2" stroke="#000" stroke-width="5.3" fill="none"/><circle cx="361.4" cy="610.4" r="8.4" fill="none" stroke="#000" stroke-width="5.6"/></g><path d="M341.8,488.6H388.2M365.0,465.4V511.8" stroke="#fff" stroke-width="2.3" fill="none"/><path d="M338.2,524.8H384.6M361.4,501.6V548.0" stroke="#fff" stroke-width="2.3" fill="none"/><path d="M338.2,566.2H384.6M361.4,543.0V589.4" stroke="#fff" stroke-width="2.3" fill="none"/><path d="M338.2,610.4H384.6M361.4,587.2V633.6" stroke="#fff" stroke-width="2.3" fill="none"/><circle cx="365" cy="488.6" r="8.4" fill="none" stroke="#fff" stroke-width="2.6"/><circle cx="361.4" cy="524.8" r="8.4" fill="none" stroke="#fff" stroke-width="2.6"/><circle cx="361.4" cy="566.2" r="8.4" fill="none" stroke="#fff" stroke-width="2.6"/><circle cx="361.4" cy="610.4" r="8.4" fill="none" stroke="#fff" stroke-width="2.6"/></g><text x="391.2" y="498.2" font-size="27.5" fill="#fff" stroke="#000" stroke-width="3" stroke-linejoin="round" paint-order="stroke">B1: Ø 101,9°C</text><text x="386.8" y="534.4" font-size="27.5" fill="#fff" stroke="#000" stroke-width="3" stroke-linejoin="round" paint-order="stroke">Bereich 2: Ø 100,4°C</text><text x="386.8" y="575.8" font-size="27.5" fill="#fff" stroke="#000" stroke-width="3" stroke-linejoin="round" paint-order="stroke">Bereich 3: Ø 100,2°C</text><text x="386.8" y="620.0" font-size="27.5" fill="#fff" stroke="#000" stroke-width="3" stroke-linejoin="round" paint-order="stroke">Bereich 4: Ø 92,9°C</text><text x="843.4" y="210.3" font-size="89.9" fill="#fcfcfc" stroke="#fcfcfc" stroke-width="1.5" stroke-linejoin="round">Ø 101,9°C</text></svg>
<div class="ptitle" style="left:1368px;width:241px"><span style="letter-spacing:-0.325px">Referenzbalken</span><svg width="34" height="18" viewBox="0 0 34 18" style="left:207.0px"><path d="M3.2,5.6h4.6M4.2,5.6v5.6M6.6,5.2v6M2.2,11.2h6.8M5.6,11.4v3.6" stroke="#000" stroke-width="1.1" fill="none"/><rect x="5.8" y="5.6" width="1.4" height="5.6" fill="#000"/><path d="M19.6,6.2l8,8M27.6,6.2l-8,8" stroke="#000" stroke-width="1.3" fill="none"/></svg></div><div id="refpanel" class="abs"><svg width="241" height="1064" viewBox="1368 66 241 1064" font-family="Liberation Sans, sans-serif"><defs><linearGradient id="cbar" gradientUnits="userSpaceOnUse" x1="0" y1="77" x2="0" y2="1130"><stop offset="0.0000" stop-color="#fffbe6"/><stop offset="0.0503" stop-color="#fff8c8"/><stop offset="0.0931" stop-color="#fff080"/><stop offset="0.1035" stop-color="#ffea48"/><stop offset="0.1453" stop-color="#ffe028"/><stop offset="0.1738" stop-color="#ffd018"/><stop offset="0.2023" stop-color="#ffc010"/><stop offset="0.2403" stop-color="#ffa808"/><stop offset="0.2745" stop-color="#ff9800"/><stop offset="0.3257" stop-color="#f88000"/><stop offset="0.3732" stop-color="#f06808"/><stop offset="0.4017" stop-color="#ec5810"/><stop offset="0.4397" stop-color="#e44430"/><stop offset="0.4682" stop-color="#dc3058"/><stop offset="0.4967" stop-color="#d02080"/><stop offset="0.5252" stop-color="#c41098"/><stop offset="0.5594" stop-color="#b408a4"/><stop offset="0.5916" stop-color="#a008a0"/><stop offset="0.6296" stop-color="#800c9c"/><stop offset="0.6676" stop-color="#581094"/><stop offset="0.7085" stop-color="#38108c"/><stop offset="0.7436" stop-color="#28108a"/><stop offset="0.7816" stop-color="#1c0c78"/><stop offset="0.8196" stop-color="#140868"/><stop offset="0.8443" stop-color="#100860"/><stop offset="0.8765" stop-color="#0c0850"/><stop offset="0.9240" stop-color="#080440"/><stop offset="0.9715" stop-color="#020030"/><stop offset="1.0000" stop-color="#00002c"/></linearGradient></defs><rect x="1384" y="77" width="18" height="1060" fill="url(#cbar)"/><path d="M1383.5,1135V76.5H1401.5V1135" stroke="#000" stroke-width="1" fill="none"/><rect x="1402" y="76.0" width="4.5" height="1.2" fill="#000"/><rect x="1402" y="182.7" width="3" height="1.2" fill="#000"/><rect x="1402" y="289.4" width="3" height="1.2" fill="#000"/><rect x="1402" y="396.1" width="3" height="1.2" fill="#000"/><rect x="1402" y="502.8" width="3" height="1.2" fill="#000"/><rect x="1402" y="609.5" width="4.5" height="1.2" fill="#000"/><rect x="1402" y="716.2" width="3" height="1.2" fill="#000"/><rect x="1402" y="822.9" width="3" height="1.2" fill="#000"/><rect x="1402" y="929.6" width="3" height="1.2" fill="#000"/><rect x="1402" y="1036.3" width="3" height="1.2" fill="#000"/><text x="1408.6" y="81" font-size="10.6" fill="#111">111,0</text><text x="1408.6" y="614" font-size="10.6" fill="#111">94,6</text><path d="M1411.8,492.8L1422.6,483.2V488.4H1437.6V497.2H1422.6V502.4Z" fill="#808080"/></svg></div>
<div class="ptitle" style="left:1613px;width:307px"><span style="left:7px;letter-spacing:-0.170px">Temperaturen</span><svg width="34" height="18" viewBox="0 0 34 18" style="left:273.5px"><path d="M3.2,5.6h4.6M4.2,5.6v5.6M6.6,5.2v6M2.2,11.2h6.8M5.6,11.4v3.6" stroke="#000" stroke-width="1.1" fill="none"/><rect x="5.8" y="5.6" width="1.4" height="5.6" fill="#000"/><path d="M19.6,6.2l8,8M27.6,6.2l-8,8" stroke="#000" stroke-width="1.3" fill="none"/></svg></div><div class="tbox" style="left:1616px;top:69px"><div class="lb" style="font-weight:bold">B1</div><div class="val">101,9°C</div><svg width="116" height="8" viewBox="0 0 116 8"><path d="M20.4,2.2h9l-4.5,4.4z" fill="#0a0ab0"/><path d="M42.4,2.2h9l-4.5,4.4z" fill="#cc2030"/></svg><div class="bar"><i style="width:100%"></i></div></div><div class="tbox" style="left:1742px;top:69px"><div class="lb">Bereich 2</div><div class="val">100,4°C</div><svg width="116" height="8" viewBox="0 0 116 8"><path d="M20.4,2.2h9l-4.5,4.4z" fill="#0a0ab0"/><path d="M42.4,2.2h9l-4.5,4.4z" fill="#cc2030"/></svg><div class="bar"><i style="width:100%"></i></div></div><div class="tbox" style="left:1616px;top:141px"><div class="lb">Bereich 3</div><div class="val">100,2°C</div><svg width="116" height="8" viewBox="0 0 116 8"><path d="M20.4,2.2h9l-4.5,4.4z" fill="#0a0ab0"/><path d="M42.4,2.2h9l-4.5,4.4z" fill="#cc2030"/></svg><div class="bar"><i style="width:100%"></i></div></div><div class="tbox" style="left:1742px;top:141px"><div class="lb">Bereich 4</div><div class="val">92,9°C</div><svg width="116" height="8" viewBox="0 0 116 8"><path d="M20.4,2.2h9l-4.5,4.4z" fill="#0a0ab0"/><path d="M42.4,2.2h9l-4.5,4.4z" fill="#cc2030"/></svg><div class="bar"><i style="width:92%"></i></div></div><div class="tbox" style="left:1616px;top:213px"><div class="lb">Mauszeiger:</div><svg width="116" height="8" viewBox="0 0 116 8"><path d="M20.4,2.2h9l-4.5,4.4z" fill="#0a0ab0"/><path d="M42.4,2.2h9l-4.5,4.4z" fill="#cc2030"/></svg><div class="bar"><i style="width:0%"></i></div></div>
<div id="player" class="abs"><svg width="1364" height="35" viewBox="0 1095 1364 35" font-family="Liberation Sans, sans-serif"><rect x="0" y="1095" width="1364" height="2" fill="#a0a0a0"/><rect x="0" y="1096" width="2.8" height="31" fill="#9c9c9c"/><rect x="0" y="1125.6" width="1364" height="1.8" fill="#fcfcfc"/><rect x="0" y="1127.6" width="1364" height="3" fill="#b8b8b8"/><rect x="173" y="1127.6" width="1189" height="3" fill="#707070"/><rect x="48" y="1127.6" width="2" height="3" fill="#e4e4e4"/><rect x="81" y="1127.6" width="2" height="3" fill="#e4e4e4"/><rect x="107" y="1127.6" width="2" height="3" fill="#e4e4e4"/><rect x="133" y="1127.6" width="2" height="3" fill="#e4e4e4"/><rect x="139" y="1127.6" width="2" height="3" fill="#e4e4e4"/><path d="M7.2,1102.9h2v9.2h-2zM9.2,1107.5l5.6,-4.6v9.2zM14.6,1107.5l5.6,-4.6v9.2zM31.8,1107.5l5.6,-4.6v9.2zM37,1107.5l5.6,-4.6v9.2zM56,1107.5l6,-4.8v9.6zM86.4,1107.5l-6,-4.8v9.6zM106.2,1107.5l-5.6,-4.6v9.2zM111.4,1107.5l-5.6,-4.6v9.2zM128.2,1107.5l-5.6,-4.6v9.2zM133.6,1107.5l-5.6,-4.6v9.2zM133.8,1102.9h2v9.2h-2z" fill="#000"/><rect x="143.2" y="1099.4" width="1" height="18.4" fill="#7e7e7e"/><rect x="195" y="1099.4" width="1" height="18.4" fill="#7e7e7e"/><path d="M154,1101.1l7.8,6.4l-7.8,6.4z" fill="#000"/><rect x="170" y="1098" width="22.4" height="18.6" fill="#cce4f7"/><rect x="176.6" y="1102" width="3.6" height="11" fill="#000"/><rect x="183.4" y="1102" width="3.6" height="11" fill="#000"/><rect x="199" y="1098" width="22.6" height="18.6" fill="#cce4f7"/><rect x="202.6" y="1105.6" width="15.4" height="6" rx="3" fill="none" stroke="#000" stroke-width="1.3"/><rect x="208" y="1104" width="7.6" height="3" fill="#cce4f7"/><path d="M208.6,1102.2l3,2.9l-3,2.9M212,1102.2l3,2.9l-3,2.9" stroke="#000" stroke-width="1.3" fill="none"/><rect x="225.6" y="1100.2" width="2.8" height="15" fill="#d4d4d4"/><rect x="237.6" y="1100.2" width="2.8" height="15" fill="#d4d4d4"/><path d="M225.4,1108.2h3.4v-3M240.8,1108.2h-3.4v-3M230.4,1107.4h5.4" stroke="#000" stroke-width="1.7" fill="none"/><path d="M225.2,1112.2h16" stroke="#000" stroke-width="1.7" stroke-dasharray="1.6,1.7"/><rect x="259.4" y="1104.2" width="1037" height="9.6" fill="#a0a0a0"/><path d="M250.4,1119V1114.2H251.8L259.6,1106.6V1119Z" fill="#a0a0a0"/><path d="M1305.4,1119V1114.2H1304L1296.2,1106.6V1119Z" fill="#a0a0a0"/><rect x="320.3" y="1113.6" width="1.2" height="5.4" fill="#a8a8a8"/><rect x="381.1" y="1113.6" width="1.2" height="5.4" fill="#a8a8a8"/><rect x="441.8" y="1113.6" width="1.2" height="5.4" fill="#a8a8a8"/><rect x="502.6" y="1113.6" width="1.2" height="5.4" fill="#a8a8a8"/><rect x="563.4" y="1113.6" width="1.2" height="5.4" fill="#a8a8a8"/><rect x="624.2" y="1113.6" width="1.2" height="5.4" fill="#a8a8a8"/><rect x="685.0" y="1113.6" width="1.2" height="5.4" fill="#a8a8a8"/><rect x="745.7" y="1113.6" width="1.2" height="5.4" fill="#a8a8a8"/><rect x="806.5" y="1113.6" width="1.2" height="5.4" fill="#a8a8a8"/><rect x="867.3" y="1113.6" width="1.2" height="5.4" fill="#a8a8a8"/><rect x="928.1" y="1113.6" width="1.2" height="5.4" fill="#a8a8a8"/><rect x="988.9" y="1113.6" width="1.2" height="5.4" fill="#a8a8a8"/><rect x="1049.6" y="1113.6" width="1.2" height="5.4" fill="#a8a8a8"/><rect x="1110.4" y="1113.6" width="1.2" height="5.4" fill="#a8a8a8"/><rect x="1171.2" y="1113.6" width="1.2" height="5.4" fill="#a8a8a8"/><rect x="1232.0" y="1113.6" width="1.2" height="5.4" fill="#a8a8a8"/><rect x="1292.8" y="1113.6" width="1.2" height="5.4" fill="#a8a8a8"/><path d="M1104.5,1107.5V1113.6" stroke="#c8c8c8" stroke-width="1.4"/><path d="M1100.4,1099.2h8.4v4.6l-4.2,4l-4.2,-4z" fill="#fff" stroke="#555" stroke-width="1"/></svg><div class="time" style="top:3.6px">0:00:02,223</div><div class="time" style="top:18.6px">0:00:02,727</div></div>
<div class="abs" style="left:1363px;top:1096px;width:1px;height:34px;background:#d4d4d4"></div></body></html>
